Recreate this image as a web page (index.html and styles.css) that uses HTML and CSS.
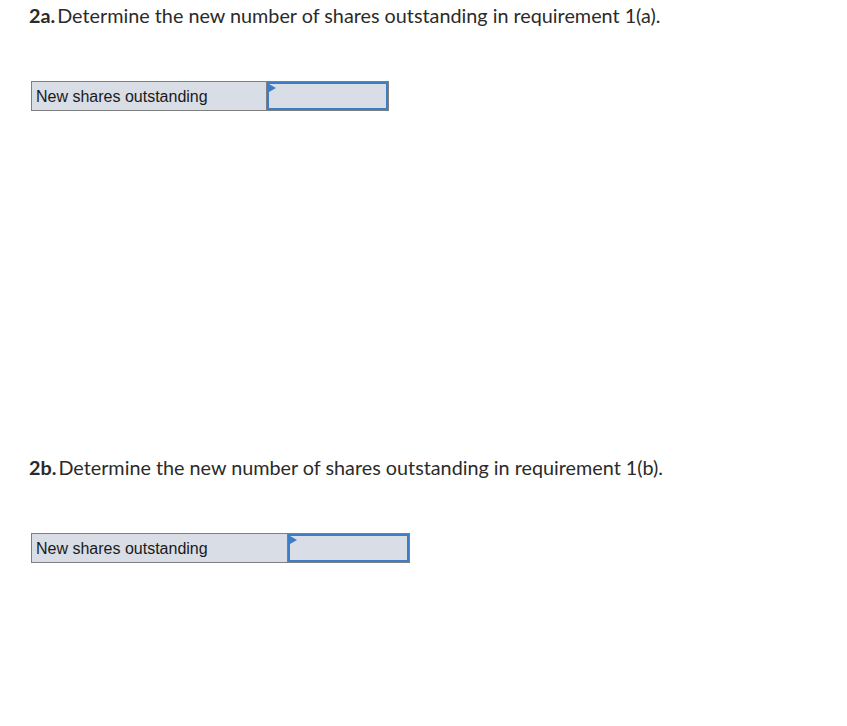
FILE: index.html
```html
<!DOCTYPE html>
<html>
<head>
<meta charset="utf-8">
<link rel="stylesheet" href="styles.css">
</head>
<body>
<div class="page">
  <section class="part part-a">
    <h2 class="q"><span class="num">2a.</span>Determine the new number of shares outstanding in requirement 1(a).</h2>
    <div class="grid grid-a">
      <div class="label">New shares outstanding</div>
      <div class="cell"><span class="input"><span class="flag"></span></span></div>
    </div>
  </section>
  <section class="part part-b">
    <h2 class="q"><span class="num">2b.</span>Determine the new number of shares outstanding in requirement 1(b).</h2>
    <div class="grid grid-b">
      <div class="label">New shares outstanding</div>
      <div class="cell"><span class="input"><span class="flag"></span></span></div>
    </div>
  </section>
</div>
</body>
</html>
```
FILE: styles.css
```css
html, body { margin: 0; padding: 0; background: #fff; }
.page { padding: 3px 0 0 29px; }
.part-a { height: 452px; }
.q {
  margin: 0;
  font-family: "Lato", "Open Sans", sans-serif;
  font-weight: 400;
  font-size: 19.8px;
  line-height: 24px;
  color: #2b2b2b;
}
.num { font-weight: 700; margin-right: 2px; }
.grid {
  display: flex;
  margin: 54px 0 0 2px;
  border: 1px solid #7f7f7f;
  height: 28px;
  background: #d8dde6;
}
.grid-a { width: 356px; }
.grid-b { width: 377px; }
.grid-a .label { width: 235px; }
.grid-b .label { width: 256px; }
.label {
  box-sizing: border-box;
  border-right: 1px solid #7f7f7f;
  font-family: "Liberation Sans", Arial, sans-serif;
  font-size: 16px;
  line-height: 28px;
  padding: 1px 0 0 4px;
  color: #1a1a1a;
}
.cell { flex: 1; display: flex; }
.input {
  position: relative;
  flex: 1;
  border: 2px solid #3d7cc6;
}
.flag {
  position: absolute;
  left: 0; top: 0;
  width: 0; height: 0;
  border-top: 4px solid transparent;
  border-bottom: 4px solid transparent;
  border-left: 7px solid #3d7cc6;
}
```
